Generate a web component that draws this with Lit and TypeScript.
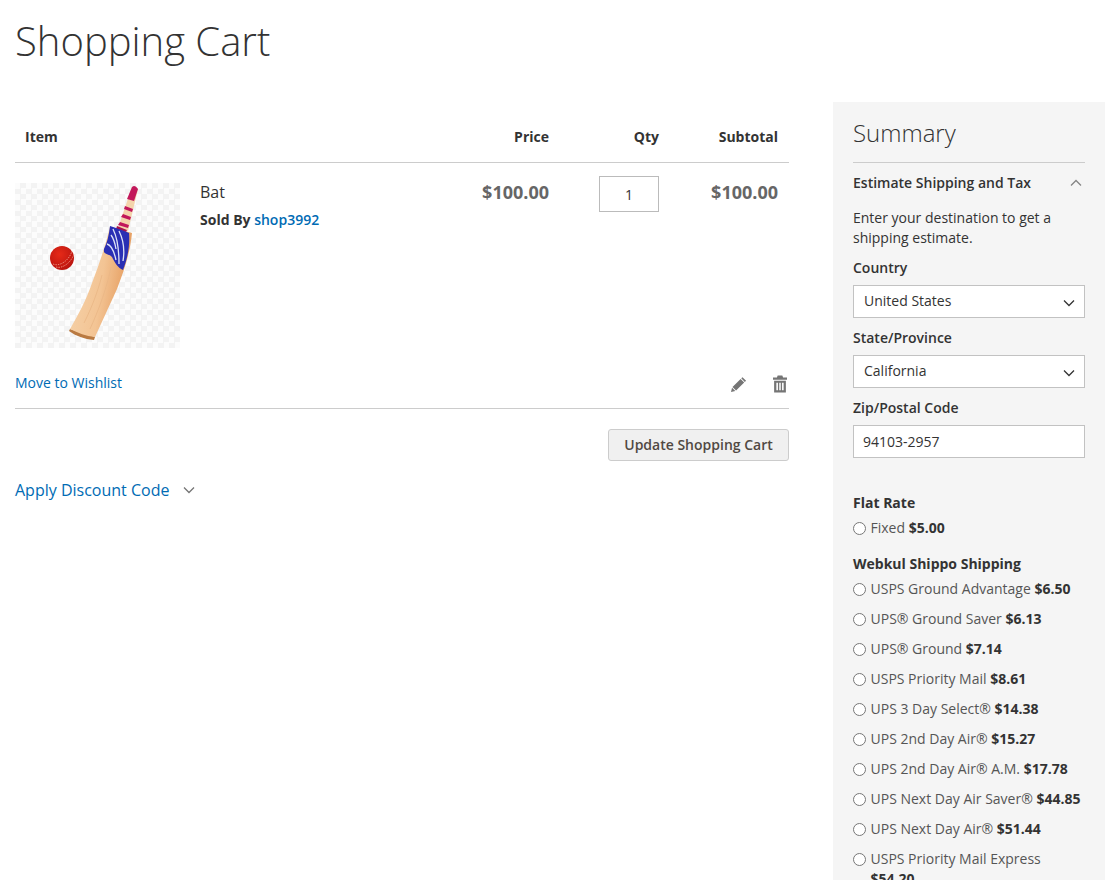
import { LitElement, html, css, svg } from 'lit';
import { customElement } from 'lit/decorators.js';

const rates = [
	['USPS Ground Advantage', '$6.50'],
	['UPS® Ground Saver', '$6.13'],
	['UPS® Ground', '$7.14'],
	['USPS Priority Mail', '$8.61'],
	['UPS 3 Day Select®', '$14.38'],
	['UPS 2nd Day Air®', '$15.27'],
	['UPS 2nd Day Air® A.M.', '$17.78'],
	['UPS Next Day Air Saver®', '$44.85'],
	['UPS Next Day Air®', '$51.44'],
	['USPS Priority Mail Express', '$54.20'],
];

const chevron = (up = false) => html`<svg class="chev" width="12" height="8" viewBox="0 0 12 8">
	<path d=${up ? 'M1 6.5 L6 1.5 L11 6.5' : 'M1 1.5 L6 6.5 L11 1.5'} fill="none" stroke="currentColor" stroke-width="1.3"/>
</svg>`;

const batPicture = svg`
	<defs>
		<linearGradient id="wood" x1="0" y1="0" x2="1" y2="0.25">
			<stop offset="0" stop-color="#f6d4ac"/>
			<stop offset="0.6" stop-color="#f3c494"/>
			<stop offset="1" stop-color="#e59c5e"/>
		</linearGradient>
		<radialGradient id="ball" cx="0.4" cy="0.35" r="0.75">
			<stop offset="0" stop-color="#e62a18"/>
			<stop offset="1" stop-color="#b5120e"/>
		</radialGradient>
	</defs>
	<path d="M55 146 L80 154 L79 157 C69 156 61 153 54 148 Z" fill="#b97a42"/>
	<path d="M95 44 L117 50 C115 70 109 88 102 106 L80 154 C71 153 63 150 55 146 C63 132 71 118 77 100 C84 82 90 64 95 44 Z" fill="url(#wood)"/>
	<path d="M87 92 C83 108 77 124 69 140 M96 84 C92 104 85 124 75 146" fill="none" stroke="#eab685" stroke-width="0.8"/>
	<path d="M117 4 L123 6 L113 48 L103 45 Z" fill="#f4d4ac"/>
	<path d="M117 4 Q120 1 123 6 L119 18 L112 16 Z" fill="#c2185b"/>
	<path d="M110 23 L118 26 L117 29 L109 26 Z M108 31 L116 34 L115 37 L106 34 Z M105 39 L114 42 L113 45 L103 42 Z" fill="#c2185b"/>
	<path d="M102 43 L112 47 L111 49 L101 46 Z" fill="#a8124c"/>
	<path d="M95 43 C101 45 108 47 114 50 C115 62 113 74 108 87 C103 85 100 80 97 74 C93 70 88 72 89 66 C92 60 94 52 95 43 Z" fill="#2a2fb4"/>
	<path d="M98 46 C102 54 104 66 104 81 M104 48 C108 56 110 66 108 78 M92 61 C96 62 99 68 101 77 M96 52 C99 56 100 60 101 66" fill="none" stroke="#dfe3f6" stroke-width="1.3"/>
	<circle cx="47" cy="75" r="12" fill="url(#ball)"/>
	<path d="M38 81 C44 84 54 78 57 68 M41 84 C47 86 56 80 59 71" fill="none" stroke="#f0a090" stroke-width="0.8" stroke-dasharray="1.5 1"/>
`;

@customElement('app-root')
export class AppRoot extends LitElement {
	static styles = css`
		:host {
			display: block;
			height: 880px;
			overflow: hidden;
			background: #fff;
			color: #333;
			font-family: "Open Sans", sans-serif;
			font-size: 14px;
			line-height: 20px;
		}

		a {
			color: #006bb4;
			text-decoration: none;
		}

		h1 {
			margin: 0;
			padding: 15px 15px 0;
			height: 88px;
			box-sizing: border-box;
			font-size: 40px;
			line-height: 52px;
			font-weight: 300;
		}

		.page {
			display: flex;
			gap: 44px;
			padding: 0 15px;
			align-items: flex-start;
		}

		.cart {
			width: 774px;
			flex: none;
		}

		.cols {
			display: grid;
			grid-template-columns: 1fr 100px 110px 119px;
			padding-right: 11px;
		}

		.head {
			height: 75px;
			box-sizing: border-box;
			padding-top: 39px;
			border-bottom: 1px solid #ccc;
			font-weight: 700;
			align-items: start;
		}

		.head span:first-child {
			padding-left: 10px;
		}

		.right {
			text-align: right;
		}

		.row {
			padding-top: 20px;
		}

		.item {
			display: flex;
			gap: 20px;
		}

		.pic {
			width: 165px;
			height: 165px;
			flex: none;
			display: block;
			background-color: #fcfcfc;
			background-image: conic-gradient(#f3f3f3 25%, transparent 0 50%, #f3f3f3 0 75%, transparent 0);
			background-size: 11px 11px;
		}

		.name {
			font-size: 16px;
			line-height: 20px;
			margin-top: -1px;
			margin-bottom: 8px;
			color: #333;
		}

		.sold {
			font-weight: 700;
			line-height: 20px;
		}

		.sold a {
			font-weight: 600;
		}

		.money {
			font-size: 18px;
			font-weight: 700;
			line-height: 20px;
			color: #666;
			margin-top: -1px;
		}

		.qty {
			display: flex;
			justify-content: flex-end;
			margin-top: -7px;
		}

		.qty input {
			width: 60px;
			height: 36px;
			box-sizing: border-box;
			border: 1px solid #bbb;
			background: #fff;
			text-align: center;
			font: 14px "Open Sans", sans-serif;
			color: #333;
			padding: 0;
			outline: none;
		}

		.actions {
			display: flex;
			align-items: center;
			justify-content: space-between;
			height: 61px;
			box-sizing: border-box;
			border-bottom: 1px solid #ccc;
			padding-top: 10px;
		}

		.icons {
			display: flex;
			gap: 26px;
			align-items: center;
			padding-right: 2px;
			margin-top: 1px;
			color: #757575;
		}

		.icons svg {
			display: block;
		}

		.update {
			display: flex;
			justify-content: flex-end;
			padding-top: 20px;
		}

		.update button {
			width: 181px;
			height: 32px;
			box-sizing: border-box;
			background: #f0f0f0;
			border: 1px solid #ccc;
			border-radius: 3px;
			color: #514943;
			font: 600 14px/18px "Open Sans", sans-serif;
			padding: 0;
		}

		.discount {
			display: flex;
			align-items: center;
			gap: 14px;
			margin-top: 19px;
			font-size: 16px;
			line-height: 20px;
			color: #006bb4;
		}

		.discount .chev {
			color: #757575;
		}

		.summary {
			width: 272px;
			flex: none;
			box-sizing: border-box;
			background: #f5f5f5;
			padding: 16px 20px 40px;
			margin-top: 14px;
		}

		.summary h2 {
			margin: 0;
			font-size: 24px;
			line-height: 30px;
			font-weight: 300;
			padding-bottom: 14px;
			border-bottom: 1px solid #ccc;
		}

		.est {
			display: flex;
			justify-content: space-between;
			align-items: center;
			font-weight: 600;
			padding: 10px 0;
			color: #333;
		}

		.est .chev {
			color: #858585;
			margin-right: 3px;
		}

		.intro {
			margin: 5px 0 0;
		}

		label.field {
			display: block;
			font-weight: 600;
			margin-top: 10px;
			margin-bottom: 7px;
		}

		.select {
			position: relative;
			height: 33px;
		}

		.select select,
		.zip {
			display: block;
			width: 100%;
			height: 33px;
			box-sizing: border-box;
			border: 1px solid #c2c2c2;
			background: #fff;
			font: 14px "Open Sans", sans-serif;
			color: #333;
			outline: none;
		}

		.select select {
			appearance: none;
			padding: 0 10px 3px;
		}

		.select .chev {
			position: absolute;
			right: 10px;
			top: 14px;
			color: #333;
			pointer-events: none;
		}

		.zip {
			padding: 0 9px 1px;
		}

		.group {
			font-weight: 700;
			margin-bottom: 5px;
		}

		.group.first {
			margin-top: 35px;
		}

		.group.next {
			margin-top: 16px;
		}

		.rate {
			display: flex;
			align-items: flex-start;
			gap: 4.5px;
			margin-bottom: 10px;
			color: #555;
		}

		.rate input {
			margin: 4px 0 0;
			width: 13px;
			height: 13px;
			flex: none;
		}

		.rate b {
			color: #333;
		}
	`;

	render()
	{
		return html`
			<h1>Shopping Cart</h1>
			<div class="page">
				<div class="cart">
					<div class="cols head">
						<span>Item</span>
						<span class="right">Price</span>
						<span class="right">Qty</span>
						<span class="right">Subtotal</span>
					</div>
					<div class="cols row">
						<div class="item">
							<svg class="pic" viewBox="0 0 165 165">${batPicture}</svg>
							<div>
								<div class="name">Bat</div>
								<div class="sold">Sold By <a href="#">shop3992</a></div>
							</div>
						</div>
						<div class="right money">$100.00</div>
						<div class="qty"><input type="text" value="1" /></div>
						<div class="right money">$100.00</div>
					</div>
					<div class="actions">
						<a href="#">Move to Wishlist</a>
						<div class="icons">
							<svg width="16" height="16" viewBox="0 0 17 17" fill="currentColor">
								<path d="M12.2 1.2 L16 5 L14.7 6.3 L10.9 2.5 Z M10.2 3.2 L14 7 L5.4 15.4 L1.6 11.6 Z M1.1 12.4 L4.6 15.9 L0 17 Z"/>
							</svg>
							<svg width="14" height="18" viewBox="0 0 15 18" fill="currentColor">
								<path fill-rule="evenodd" d="M5 0 H10 L10.8 2 H15 V4.4 H0 V2 H4.2 Z M1.2 5.4 H13.8 V18 H1.2 Z M3.6 7.6 V15.8 H5.3 V7.6 Z M6.7 7.6 V15.8 H8.3 V7.6 Z M9.7 7.6 V15.8 H11.4 V7.6 Z"/>
							</svg>
						</div>
					</div>
					<div class="update"><button>Update Shopping Cart</button></div>
					<div class="discount"><span>Apply Discount Code</span>${chevron()}</div>
				</div>
				<aside class="summary">
					<h2>Summary</h2>
					<div class="est"><span>Estimate Shipping and Tax</span>${chevron(true)}</div>
					<p class="intro">Enter your destination to get a shipping estimate.</p>
					<label class="field">Country</label>
					<div class="select"><select><option>United States</option></select>${chevron()}</div>
					<label class="field">State/Province</label>
					<div class="select"><select><option>California</option></select>${chevron()}</div>
					<label class="field">Zip/Postal Code</label>
					<input class="zip" type="text" value="94103-2957" />
					<div class="group first">Flat Rate</div>
					<label class="rate"><input type="radio" name="r" /><span>Fixed <b>$5.00</b></span></label>
					<div class="group next">Webkul Shippo Shipping</div>
					${rates.map(([name, price]) => html`
						<label class="rate"><input type="radio" name="r" /><span>${name} <b>${price}</b></span></label>
					`)}
				</aside>
			</div>
		`;
	}
}
